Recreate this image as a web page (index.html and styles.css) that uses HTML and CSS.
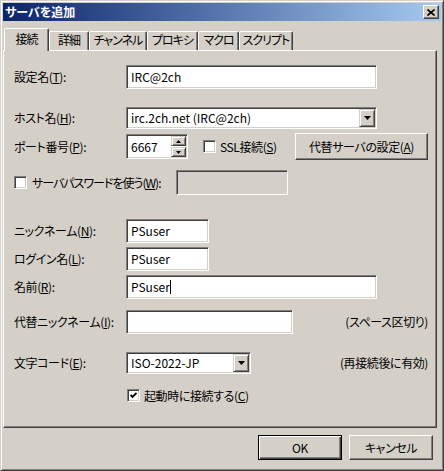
FILE: index.html
```html
<!DOCTYPE html>
<html lang="ja">
<head>
<meta charset="UTF-8" />
<title>サーバを追加</title>
<link rel="stylesheet" href="styles.css">
</head>
<body>

<div class="window">
  <div class="titlebar">
    <span class="title">サーバを追加</span>
    <span class="close">
      <svg width="8" height="7" viewBox="0 0 8 7"><path d="M0.5 0.5 L7.5 6.5 M7.5 0.5 L0.5 6.5" stroke="#000" stroke-width="1.6" fill="none"/></svg>
    </span>
  </div>

  <div class="tabs">
    <div class="tab active">接続</div>
    <div class="tab">詳細</div>
    <div class="tab">チャンネル</div>
    <div class="tab">プロキシ</div>
    <div class="tab">マクロ</div>
    <div class="tab">スクリプト</div>
  </div>

  <div class="panel">
    <div class="row r1">
      <span class="lbl">設定名(<u>T</u>):</span>
      <div class="edit w-long">IRC@2ch</div>
    </div>

    <div class="row r2">
      <span class="lbl">ホスト名(<u>H</u>):</span>
      <div class="combo w-long">
        <span class="combo-val">irc.2ch.net (IRC@2ch)</span>
        <span class="drop"><svg width="7" height="4" viewBox="0 0 7 4"><polygon points="0,0 7,0 3.5,4" fill="#000"/></svg></span>
      </div>
    </div>

    <div class="row r3">
      <span class="lbl">ポート番号(<u>P</u>):</span>
      <div class="spin">
        <span class="spin-val">6667</span>
        <div class="spin-btns">
          <span class="spin-btn"><svg width="5" height="3" viewBox="0 0 5 3"><polygon points="2.5,0 5,3 0,3" fill="#000"/></svg></span>
          <span class="spin-btn"><svg width="5" height="3" viewBox="0 0 5 3"><polygon points="0,0 5,0 2.5,3" fill="#000"/></svg></span>
        </div>
      </div>
      <span class="check ssl"></span>
      <span class="check-lbl">SSL接続(<u>S</u>)</span>
      <span class="btn btn-alt">代替サーバの設定(<u>A</u>)</span>
    </div>

    <div class="row r4">
      <span class="pass-lbl">
        <span class="check"></span>
        <span class="check-lbl">サーバパスワードを使う(<u>W</u>):</span>
      </span>
      <div class="edit disabled w-pass"></div>
    </div>

    <div class="row r5">
      <span class="lbl">ニックネーム(<u>N</u>):</span>
      <div class="edit w-short">PSuser</div>
    </div>

    <div class="row r6">
      <span class="lbl">ログイン名(<u>L</u>):</span>
      <div class="edit w-short">PSuser</div>
    </div>

    <div class="row r7">
      <span class="lbl">名前(<u>R</u>):</span>
      <div class="edit w-long">PSuser<span class="caret"></span></div>
    </div>

    <div class="row r8">
      <span class="lbl">代替ニックネーム(<u>I</u>):</span>
      <div class="edit w-alt"></div>
      <span class="note">(スペース区切り)</span>
    </div>

    <div class="row r9">
      <span class="lbl">文字コード(<u>E</u>):</span>
      <div class="combo w-code">
        <span class="combo-val">ISO-2022-JP</span>
        <span class="drop"><svg width="7" height="4" viewBox="0 0 7 4"><polygon points="0,0 7,0 3.5,4" fill="#000"/></svg></span>
      </div>
      <span class="note">(再接続後に有効)</span>
    </div>

    <div class="row r10">
      <span class="check on"><svg width="7" height="7" viewBox="0 0 7 7"><path d="M0.5 3 L2.5 5 L6.5 1" stroke="#000" stroke-width="1.8" fill="none"/></svg></span>
      <span class="check-lbl">起動時に接続する(<u>C</u>)</span>
    </div>
  </div>

  <div class="buttons">
    <span class="btn btn-ok">OK</span>
    <span class="btn">キャンセル</span>
  </div>
</div>

</body>
</html>
```

FILE: styles.css
```css
* {
  box-sizing: border-box;
}

body {
  margin: 0;
  background: #d4d0c8;
  font-family: "Noto Sans CJK JP", sans-serif;
  font-size: 12px;
  line-height: 14px;
  font-feature-settings: "palt";
  color: #000;
}

u {
  text-underline-offset: 1px;
}

/* window frame */
.window {
  width: 444px;
  height: 471px;
  display: flex;
  flex-direction: column;
  padding: 2px;
  border: 1px solid;
  border-color: #d4d0c8 #404040 #404040 #d4d0c8;
  box-shadow: inset 1px 1px #fff, inset -1px -1px #808080;
}

.titlebar {
  height: 18px;
  display: flex;
  align-items: center;
  padding: 0 2px;
  background: linear-gradient(to right, #0a246a, #a6caf0);
}

.title {
  flex: 1;
  color: #fff;
  font-weight: bold;
}

.close {
  width: 16px;
  height: 14px;
  display: flex;
  align-items: center;
  justify-content: center;
  background: #d4d0c8;
  border: 1px solid;
  border-color: #fff #404040 #404040 #fff;
  box-shadow: inset -1px -1px #808080;
}

/* tabs */
.tabs {
  display: flex;
  align-items: flex-end;
  height: 22px;
  margin-top: 7px;
  padding-left: 1px;
}

.tab {
  height: 19px;
  padding-top: 1px;
  text-align: center;
  letter-spacing: -1px;
  border: 1px solid;
  border-bottom: 0;
  border-color: #fff #404040 transparent #fff;
  border-radius: 2px 2px 0 0;
  box-shadow: inset -1px 0 #808080;
  background: #d4d0c8;
}

.tab:nth-child(1) { width: 45px; }
.tab:nth-child(2) { width: 40px; }
.tab:nth-child(3) { width: 58px; }
.tab:nth-child(4) { width: 51px; }
.tab:nth-child(5) { width: 41px; }
.tab:nth-child(6) { width: 54px; }

.tab.active {
  height: 23px;
  margin-bottom: -1px;
  padding-top: 3px;
  position: relative;
  z-index: 1;
}

.panel {
  height: 378px;
  width: 434px;
  display: flex;
  flex-direction: column;
  padding: 0 8px 0 10px;
  border: 1px solid;
  border-color: #fff #404040 #404040 #fff;
  box-shadow: inset -1px -1px #808080;
}

/* form rows */
.row {
  display: flex;
  align-items: center;
}

.r1 { margin-top: 14px; height: 24px; }
.r2 { margin-top: 18px; height: 22px; }
.r3 { margin-top: 4px; height: 27px; }
.r4 { margin-top: 10px; height: 25px; }
.r5 { margin-top: 24px; height: 24px; }
.r6 { margin-top: 4px; height: 24px; }
.r7 { margin-top: 4px; height: 24px; }
.r8 { margin-top: 11px; height: 24px; }
.r9 { margin-top: 18px; height: 22px; }
.r10 { margin-top: 15px; height: 13px; padding-left: 113px; }

.lbl,
.check-lbl,
.note,
.btn {
  letter-spacing: -0.4px;
}

.lbl {
  width: 112px;
  flex-shrink: 0;
}

.edit,
.combo,
.spin {
  height: 100%;
  display: flex;
  align-items: center;
  background: #fff;
  border: 1px solid;
  border-color: #808080 #fff #fff #808080;
  box-shadow: inset 1px 1px #404040, inset -1px -1px #d4d0c8;
  padding: 1px 1px 1px 4px;
  white-space: nowrap;
}

.edit.disabled {
  background: #d4d0c8;
}

.w-long { width: 251px; }
.w-short { width: 83px; }
.w-alt { width: 167px; }
.w-code { width: 125px; }
.w-pass { width: 112px; }

.caret {
  width: 1px;
  height: 14px;
  background: #000;
}

.combo-val {
  flex: 1;
}

.drop {
  width: 16px;
  height: 18px;
  display: flex;
  align-items: center;
  justify-content: center;
  background: #d4d0c8;
  border: 1px solid;
  border-color: #d4d0c8 #404040 #404040 #d4d0c8;
  box-shadow: inset 1px 1px #fff, inset -1px -1px #808080;
}

.spin {
  width: 62px;
  height: 25px;
}

.spin-val {
  flex: 1;
}

.spin-btns {
  display: flex;
  flex-direction: column;
  gap: 1px;
}

.spin-btn {
  width: 15px;
  height: 10px;
  display: flex;
  align-items: center;
  justify-content: center;
  background: #d4d0c8;
  border: 1px solid;
  border-color: #d4d0c8 #404040 #404040 #d4d0c8;
  box-shadow: inset 1px 1px #fff, inset -1px -1px #808080;
}

/* checkboxes */
.check {
  width: 13px;
  height: 13px;
  flex-shrink: 0;
  display: flex;
  align-items: center;
  justify-content: center;
  background: #fff;
  border: 1px solid;
  border-color: #808080 #fff #fff #808080;
  box-shadow: inset 1px 1px #404040, inset -1px -1px #d4d0c8;
}

.check-lbl {
  margin-left: 4px;
}

.ssl {
  margin-left: 15px;
}

.pass-lbl {
  width: 162px;
  display: flex;
  align-items: center;
}

.pass-lbl .check-lbl {
  margin-left: 5px;
  letter-spacing: -1px;
}

.note {
  margin-left: auto;
}

/* push buttons */
.btn {
  width: 84px;
  height: 25px;
  display: flex;
  align-items: center;
  justify-content: center;
  background: #d4d0c8;
  border: 1px solid;
  border-color: #fff #404040 #404040 #fff;
  box-shadow: inset -1px -1px #808080;
}

.btn-alt {
  width: 133px;
  height: 27px;
  margin-left: auto;
}

.btn-ok {
  border-color: #000;
  box-shadow: inset 1px 1px #fff, inset -1px -1px #404040, inset -2px -2px #808080;
}

.buttons {
  display: flex;
  justify-content: flex-end;
  gap: 7px;
  margin-top: 7px;
  padding-right: 8px;
}
```
